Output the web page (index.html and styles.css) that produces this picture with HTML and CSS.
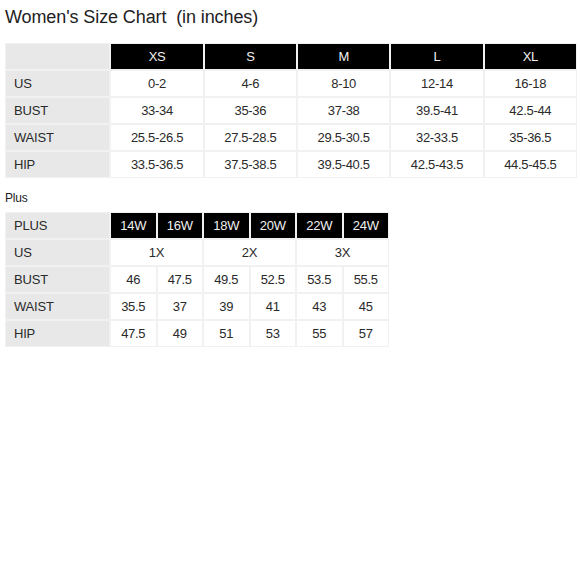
FILE: index.html
```html
<!DOCTYPE html>
<html>
<head>
<meta charset="utf-8">
<link rel="stylesheet" href="styles.css">
</head>
<body>
<div class="page">
  <h1 class="title">Women's Size Chart&nbsp; (in inches)</h1>
  <table class="chart chart-main">
    <tr class="head">
      <td class="label"></td><td>XS</td><td>S</td><td>M</td><td>L</td><td>XL</td>
    </tr>
    <tr><td class="label">US</td><td>0-2</td><td>4-6</td><td>8-10</td><td>12-14</td><td>16-18</td></tr>
    <tr><td class="label">BUST</td><td>33-34</td><td>35-36</td><td>37-38</td><td>39.5-41</td><td>42.5-44</td></tr>
    <tr><td class="label">WAIST</td><td>25.5-26.5</td><td>27.5-28.5</td><td>29.5-30.5</td><td>32-33.5</td><td>35-36.5</td></tr>
    <tr><td class="label">HIP</td><td>33.5-36.5</td><td>37.5-38.5</td><td>39.5-40.5</td><td>42.5-43.5</td><td>44.5-45.5</td></tr>
  </table>
  <p class="subtitle">Plus</p>
  <table class="chart chart-plus">
    <tr class="head">
      <td class="label">PLUS</td><td>14W</td><td>16W</td><td>18W</td><td>20W</td><td>22W</td><td>24W</td>
    </tr>
    <tr><td class="label">US</td><td colspan="2">1X</td><td colspan="2">2X</td><td colspan="2">3X</td></tr>
    <tr><td class="label">BUST</td><td>46</td><td>47.5</td><td>49.5</td><td>52.5</td><td>53.5</td><td>55.5</td></tr>
    <tr><td class="label">WAIST</td><td>35.5</td><td>37</td><td>39</td><td>41</td><td>43</td><td>45</td></tr>
    <tr><td class="label">HIP</td><td>47.5</td><td>49</td><td>51</td><td>53</td><td>55</td><td>57</td></tr>
  </table>
</div>
</body>
</html>
```

FILE: styles.css
```css
html, body {
  margin: 0;
  padding: 0;
  background: #ffffff;
}

.page {
  padding: 6px 5px;
  font-family: "Liberation Sans", Arial, sans-serif;
  color: #222222;
}

.title {
  margin: 0 0 15px 0;
  font-size: 18px;
  font-weight: normal;
  line-height: 22px;
  letter-spacing: -0.1px;
  color: #222222;
}

.chart {
  border-collapse: separate;
  border-spacing: 0;
  table-layout: fixed;
}

.chart td {
  height: 27px;
  padding: 0;
  border: 1px solid #f1f1f1;
  font-size: 13px;
  letter-spacing: -0.3px;
  text-align: center;
  vertical-align: middle;
  color: #2a2a2a;
  box-sizing: border-box;
}

.chart td.label {
  width: 105px;
  background: #e8e8e8;
  text-align: left;
  padding-left: 8px;
  letter-spacing: -0.2px;
}

.chart .head td {
  background: #000000;
  color: #f0f0f0;
  font-weight: normal;
}

.chart .head td.label {
  background: #e8e8e8;
  color: #2a2a2a;
}

.chart-main {
  width: 572px;
}

.chart-main td {
  width: 93px;
}

.chart-plus {
  width: 384px;
}

.chart-plus td {
  width: 46.5px;
}

.subtitle {
  margin: 12px 0 6px 0;
  font-size: 12px;
  line-height: 16px;
  letter-spacing: -0.2px;
}
```
